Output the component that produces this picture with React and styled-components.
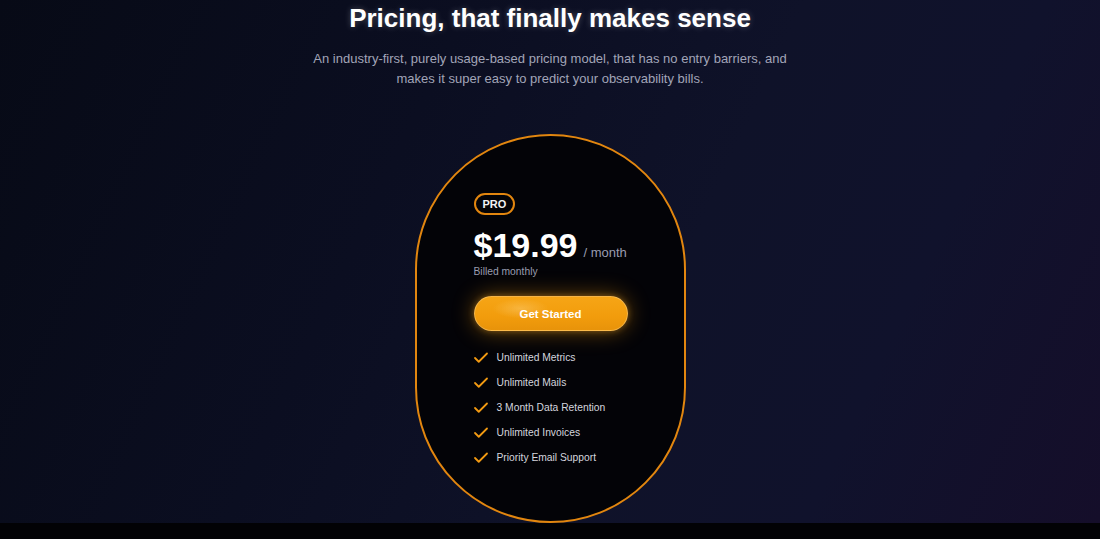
import React from "react";
import styled, { createGlobalStyle } from "styled-components";
import { Check } from "lucide-react";

const Global = createGlobalStyle`
  html, body { margin: 0; padding: 0; background: #020205; }
  body { font-family: "Liberation Sans", Arial, sans-serif; }
  * { box-sizing: border-box; }
`;

const Page = styled.div`
  width: 100%;
  min-height: 539px;
  display: flex;
  flex-direction: column;
  background: #020205;
`;

const Section = styled.section`
  display: flex;
  flex-direction: column;
  align-items: center;
  padding-top: 3px;
  background: linear-gradient(115deg, #070a16 0%, #0b0e21 35%, #0f1229 60%, #10122c 78%, #150e2a 100%);
`;

const Title = styled.h1`
  margin: 0;
  font-size: 26px;
  line-height: 30px;
  font-weight: 700;
  color: #ffffff;
  text-shadow: 0 0 6px rgba(255, 255, 255, 0.25);
`;

const Subtitle = styled.p`
  margin: 16px 0 0;
  max-width: 490px;
  text-align: center;
  font-size: 13px;
  line-height: 20px;
  color: #a2a5b8;
`;

const Card = styled.div`
  margin-top: 45px;
  width: 271px;
  height: 389px;
  border-radius: 9999px;
  border: 2px solid #e2860f;
  background: #030307;
  padding: 57px 56px 0 57px;
  display: flex;
  flex-direction: column;
  align-items: flex-start;
`;

const Badge = styled.span`
  display: inline-block;
  padding: 3px 7px;
  border: 2px solid #e2860f;
  border-radius: 999px;
  font-size: 11px;
  line-height: 12px;
  font-weight: 700;
  color: #f2f2f5;
`;

const PriceRow = styled.div`
  margin-top: 13px;
  display: flex;
  align-items: baseline;
  gap: 6px;
  white-space: nowrap;
`;

const Price = styled.span`
  font-size: 34px;
  line-height: 35px;
  font-weight: 700;
  color: #ffffff;
`;

const Period = styled.span`
  font-size: 13px;
  color: #9a9db0;
`;

const Billed = styled.div`
  margin-top: 3px;
  font-size: 10.3px;
  line-height: 12px;
  color: #9a9db0;
`;

const Button = styled.button`
  margin-top: 18px;
  width: 154px;
  height: 35px;
  border-radius: 999px;
  border: 1px solid rgba(255, 205, 120, 0.55);
  background:
    radial-gradient(ellipse 40px 14px at 30% 35%, rgba(255, 220, 150, 0.35), transparent 70%),
    linear-gradient(180deg, #f6a516 0%, #f29c0c 60%, #e8930a 100%);
  box-shadow: 0 0 22px rgba(245, 158, 11, 0.45), 0 0 6px rgba(255, 180, 60, 0.35);
  color: #ffffff;
  font-family: "Liberation Sans", Arial, sans-serif;
  font-size: 11.5px;
  font-weight: 700;
  cursor: pointer;
`;

const Features = styled.ul`
  list-style: none;
  margin: 14px 0 0;
  padding: 0;
  display: flex;
  flex-direction: column;
`;

const Feature = styled.li`
  height: 25px;
  display: flex;
  align-items: center;
  gap: 7px;
  margin-left: -2px;
  font-size: 10.3px;
  color: #d4d5de;
`;

const Icon = styled(Check)`
  color: #f29a12;
  flex-shrink: 0;
`;

const BottomBar = styled.div`
  height: 16px;
  background: #020205;
`;

const features = [
  "Unlimited Metrics",
  "Unlimited Mails",
  "3 Month Data Retention",
  "Unlimited Invoices",
  "Priority Email Support",
];

export default function App() {
  return (
    <Page>
      <Global />
      <Section>
        <Title>Pricing, that finally makes sense</Title>
        <Subtitle>
          An industry-first, purely usage-based pricing model, that has no entry barriers, and
          makes it super easy to predict your observability bills.
        </Subtitle>
        <Card>
          <Badge>PRO</Badge>
          <PriceRow>
            <Price>$19.99</Price>
            <Period>/ month</Period>
          </PriceRow>
          <Billed>Billed monthly</Billed>
          <Button>Get Started</Button>
          <Features>
            {features.map((f) => (
              <Feature key={f}>
                <Icon size={18} strokeWidth={2.4} />
                {f}
              </Feature>
            ))}
          </Features>
        </Card>
      </Section>
      <BottomBar />
    </Page>
  );
}
